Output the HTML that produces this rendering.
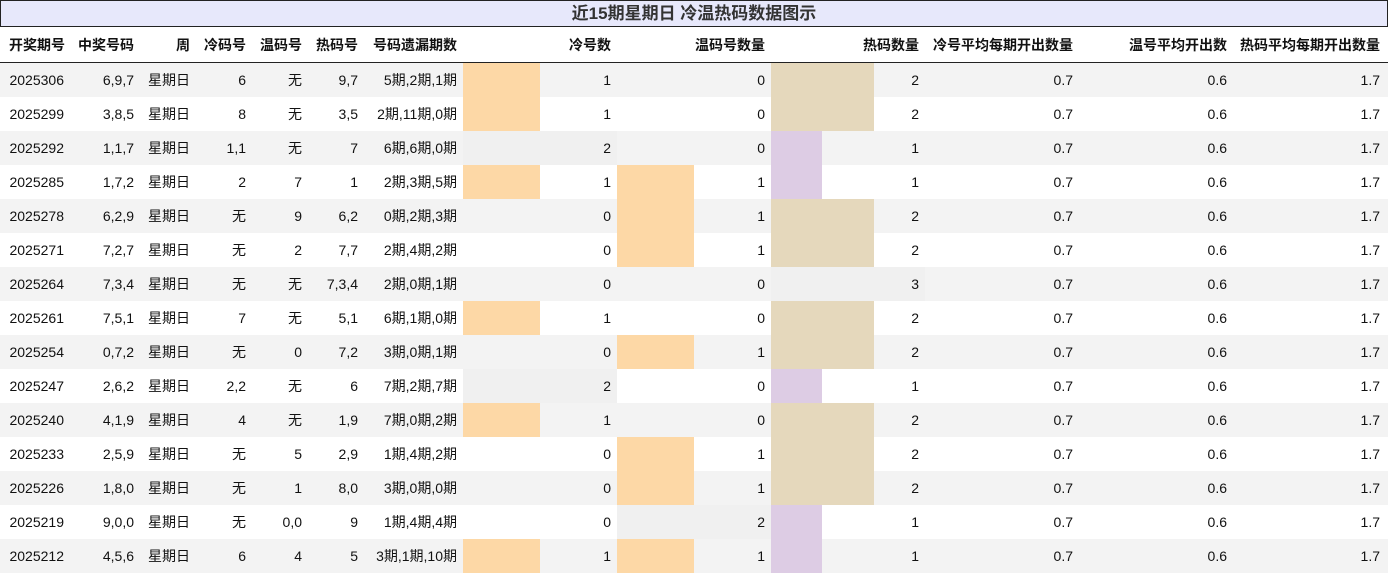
<!DOCTYPE html>
<html><head><meta charset="utf-8"><style>
body{margin:0;background:#fff;font-family:"Liberation Sans","Noto Sans CJK SC",sans-serif;font-size:14px;color:#111}
.t{position:absolute;left:0;top:0;width:1386px;height:25px;background:#e7e8fb;border:1px solid #222;text-align:center;line-height:25px;font-weight:bold;font-size:17px;color:#333}
table{position:absolute;left:0;top:27px;border-collapse:collapse;table-layout:fixed;width:1388px}
td,th{padding:0 6px 0 0;text-align:right;white-space:nowrap;overflow:hidden}
td:last-child,th:last-child{padding-right:8px}
td:first-child{padding-right:7px}
th{height:35px;font-weight:bold;border-bottom:1px solid #222}
td{height:34px}
tr.o td{background-color:#f3f3f3}
td.c1,td.w1{background:linear-gradient(90deg,#fdd8a6 50%,transparent 50%)}
tr.o td.c1,tr.o td.w1{background:linear-gradient(90deg,#fdd8a6 50%,#f3f3f3 50%)}
td.c2,td.w2,td.h3{background:#f0f0f0!important}
td.h1{background:linear-gradient(90deg,#ddcce4 33%,transparent 33%)}
tr.o td.h1{background:linear-gradient(90deg,#ddcce4 33%,#f3f3f3 33%)}
td.h2{background:linear-gradient(90deg,#e5d8bc 67%,transparent 67%)}
tr.o td.h2{background:linear-gradient(90deg,#e5d8bc 67%,#f3f3f3 67%)}
</style></head><body>
<div class="t">近15期星期日 冷温热码数据图示</div>
<table>
<colgroup><col style="width:71px"><col style="width:69px"><col style="width:56px"><col style="width:56px"><col style="width:56px"><col style="width:56px"><col style="width:99px"><col style="width:154px"><col style="width:154px"><col style="width:154px"><col style="width:154px"><col style="width:154px"><col style="width:155px"></colgroup>
<tr><th>开奖期号</th><th>中奖号码</th><th>周</th><th>冷码号</th><th>温码号</th><th>热码号</th><th>号码遗漏期数</th><th>冷号数</th><th>温码号数量</th><th>热码数量</th><th>冷号平均每期开出数量</th><th>温号平均开出数</th><th>热码平均每期开出数量</th></tr>
<tr class="o"><td>2025306</td><td>6,9,7</td><td>星期日</td><td>6</td><td>无</td><td>9,7</td><td>5期,2期,1期</td><td class="c1">1</td><td>0</td><td class="h2">2</td><td>0.7</td><td>0.6</td><td>1.7</td></tr>
<tr><td>2025299</td><td>3,8,5</td><td>星期日</td><td>8</td><td>无</td><td>3,5</td><td>2期,11期,0期</td><td class="c1">1</td><td>0</td><td class="h2">2</td><td>0.7</td><td>0.6</td><td>1.7</td></tr>
<tr class="o"><td>2025292</td><td>1,1,7</td><td>星期日</td><td>1,1</td><td>无</td><td>7</td><td>6期,6期,0期</td><td class="c2">2</td><td>0</td><td class="h1">1</td><td>0.7</td><td>0.6</td><td>1.7</td></tr>
<tr><td>2025285</td><td>1,7,2</td><td>星期日</td><td>2</td><td>7</td><td>1</td><td>2期,3期,5期</td><td class="c1">1</td><td class="w1">1</td><td class="h1">1</td><td>0.7</td><td>0.6</td><td>1.7</td></tr>
<tr class="o"><td>2025278</td><td>6,2,9</td><td>星期日</td><td>无</td><td>9</td><td>6,2</td><td>0期,2期,3期</td><td>0</td><td class="w1">1</td><td class="h2">2</td><td>0.7</td><td>0.6</td><td>1.7</td></tr>
<tr><td>2025271</td><td>7,2,7</td><td>星期日</td><td>无</td><td>2</td><td>7,7</td><td>2期,4期,2期</td><td>0</td><td class="w1">1</td><td class="h2">2</td><td>0.7</td><td>0.6</td><td>1.7</td></tr>
<tr class="o"><td>2025264</td><td>7,3,4</td><td>星期日</td><td>无</td><td>无</td><td>7,3,4</td><td>2期,0期,1期</td><td>0</td><td>0</td><td class="h3">3</td><td>0.7</td><td>0.6</td><td>1.7</td></tr>
<tr><td>2025261</td><td>7,5,1</td><td>星期日</td><td>7</td><td>无</td><td>5,1</td><td>6期,1期,0期</td><td class="c1">1</td><td>0</td><td class="h2">2</td><td>0.7</td><td>0.6</td><td>1.7</td></tr>
<tr class="o"><td>2025254</td><td>0,7,2</td><td>星期日</td><td>无</td><td>0</td><td>7,2</td><td>3期,0期,1期</td><td>0</td><td class="w1">1</td><td class="h2">2</td><td>0.7</td><td>0.6</td><td>1.7</td></tr>
<tr><td>2025247</td><td>2,6,2</td><td>星期日</td><td>2,2</td><td>无</td><td>6</td><td>7期,2期,7期</td><td class="c2">2</td><td>0</td><td class="h1">1</td><td>0.7</td><td>0.6</td><td>1.7</td></tr>
<tr class="o"><td>2025240</td><td>4,1,9</td><td>星期日</td><td>4</td><td>无</td><td>1,9</td><td>7期,0期,2期</td><td class="c1">1</td><td>0</td><td class="h2">2</td><td>0.7</td><td>0.6</td><td>1.7</td></tr>
<tr><td>2025233</td><td>2,5,9</td><td>星期日</td><td>无</td><td>5</td><td>2,9</td><td>1期,4期,2期</td><td>0</td><td class="w1">1</td><td class="h2">2</td><td>0.7</td><td>0.6</td><td>1.7</td></tr>
<tr class="o"><td>2025226</td><td>1,8,0</td><td>星期日</td><td>无</td><td>1</td><td>8,0</td><td>3期,0期,0期</td><td>0</td><td class="w1">1</td><td class="h2">2</td><td>0.7</td><td>0.6</td><td>1.7</td></tr>
<tr><td>2025219</td><td>9,0,0</td><td>星期日</td><td>无</td><td>0,0</td><td>9</td><td>1期,4期,4期</td><td>0</td><td class="w2">2</td><td class="h1">1</td><td>0.7</td><td>0.6</td><td>1.7</td></tr>
<tr class="o"><td>2025212</td><td>4,5,6</td><td>星期日</td><td>6</td><td>4</td><td>5</td><td>3期,1期,10期</td><td class="c1">1</td><td class="w1">1</td><td class="h1">1</td><td>0.7</td><td>0.6</td><td>1.7</td></tr>
</table>
</body></html>
